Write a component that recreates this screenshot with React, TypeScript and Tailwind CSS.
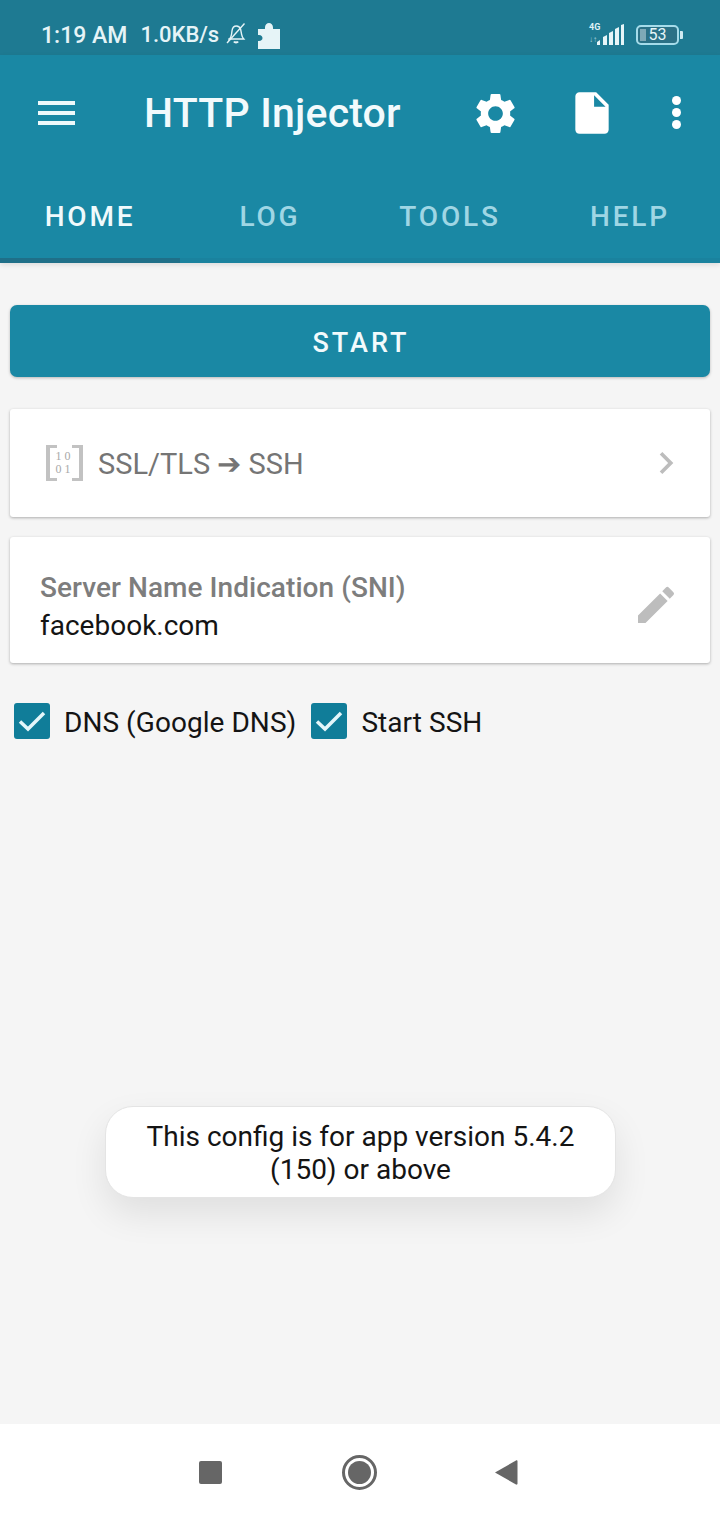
import { MdChevronRight, MdEdit, MdInsertDriveFile, MdSettings } from "react-icons/md";

function MutedBell() {
  return (
    <svg width="24" height="24" viewBox="0 0 24 24" fill="none" stroke="#e6f4f7" strokeWidth="1.4">
      <path d="M5 18.500c1.600-1.600 2.400-3 2.600-5.500l.4-3.200C8.400 7 10 5 12.400 5c2.200 0 3.600 1.400 4.200 3.200l1 5.200c.3 1.900 1 3.300 2.200 4.600H5z" />
      <path d="M3 22 20.500 2.500" />
      <path d="M10 20.500c.6 1.200 3.400 1.200 4 0" strokeWidth="2" />
    </svg>
  );
}

function Puzzle() {
  return (
    <svg width="22" height="27" viewBox="0 0 22 27" fill="#e6f4f7">
      <path d="M0 7h7c-1-8 9-8 8 0h7v20H0v-8c6 1 6-7 0-6z" />
    </svg>
  );
}

function Signal() {
  return (
    <div className="relative w-[36px] h-[22px]">
      <span className="absolute left-0 top-[-2px] text-[9px] leading-[10px] font-bold text-[#dff1f5]">4G</span>
      <span className="absolute left-0 bottom-[2px] text-[8px] leading-[9px] text-[#a9d5df]">↓↑</span>
      <svg className="absolute left-[7px] top-0" width="29" height="22" viewBox="0 0 29 22" fill="#e6f5f8">
        <path d="M1 21v-3l3-2v5z" />
        <path d="M7 21v-8l4-2v10z" />
        <path d="M13 21V9l4-2v14z" />
        <path d="M19 21V5l4-2v18z" />
        <path d="M25 21V1l3-1v21z" />
      </svg>
    </div>
  );
}

function Battery() {
  return (
    <div className="flex items-center">
      <div className="relative w-[43px] h-[20px] rounded-[5px] border-[2px] border-[#a5dcea] bg-[#2b7186] overflow-hidden flex items-center justify-center">
        <div className="absolute left-[2px] top-[2px] bottom-[2px] w-[6px] bg-[#7fa9b6]" />
        <span className="relative text-[16px] leading-none text-[#e6f5f8]">53</span>
      </div>
      <div className="w-[3px] h-[8px] ml-[1px] bg-[#cfeaf1] rounded-r-[1px]" />
    </div>
  );
}

function StatusBar() {
  return (
    <div className="h-[55px] bg-[#1e7a92] flex items-center pt-[15px] pl-[41px] pr-[37px] text-[#e6f4f7]">
      <span className="text-[23px] font-medium leading-none">1:19 AM</span>
      <span className="ml-[13px] text-[22px] font-medium leading-none">1.0KB/s</span>
      <span className="ml-[5px] mt-[-4px]">
        <MutedBell />
      </span>
      <span className="ml-[10px] mr-auto">
        <Puzzle />
      </span>
      <Signal />
      <div className="ml-[11px]">
        <Battery />
      </div>
    </div>
  );
}

function Toolbar() {
  return (
    <div className="h-[115px] flex items-center pl-[38px] pt-[1px]">
      <div className="flex flex-col gap-[6px] w-[37px]">
        <div className="h-[4px] bg-[#eef9fb]" />
        <div className="h-[4px] bg-[#eef9fb]" />
        <div className="h-[4px] bg-[#eef9fb]" />
      </div>
      <h1 className="ml-[69px] text-[41px] leading-none font-medium text-[#f2fafc] whitespace-nowrap tracking-[0.2px]">
        HTTP Injector
      </h1>
      <MdSettings className="ml-[70px]" size={49} color="#fff" />
      <MdInsertDriveFile className="ml-[47px]" size={50} color="#fff" />
      <div className="ml-[55px] flex flex-col gap-[3px] mt-[-2px]">
        <div className="w-[9px] h-[9px] rounded-full bg-white" />
        <div className="w-[9px] h-[9px] rounded-full bg-white" />
        <div className="w-[9px] h-[9px] rounded-full bg-white" />
      </div>
    </div>
  );
}

function Tabs() {
  const tabs = ["HOME", "LOG", "TOOLS", "HELP"];
  return (
    <div className="relative h-[93px] grid grid-cols-4">
      {tabs.map((t, i) => (
        <div
          key={t}
          className={
            i === 0
              ? "flex justify-center pt-[30px] text-[28px] leading-[33px] font-medium tracking-[2.8px] text-[#f0fafc]"
              : "flex justify-center pt-[30px] text-[28px] leading-[33px] font-medium tracking-[2.8px] text-[#9fd6e4]"
          }
        >
          {t}
        </div>
      ))}
      <div className="absolute left-0 right-0 bottom-0 h-[5px] bg-[#1a829e]" />
      <div className="absolute left-0 bottom-0 w-[180px] h-[5px] bg-[#1f6f88]" />
    </div>
  );
}

function BinaryIcon() {
  return (
    <div className="relative w-[37px] h-[36px] border-x-[4px] border-[#c2c2c2] flex flex-col items-center justify-center font-['Liberation_Serif',serif] text-[12px] leading-[13px] tracking-[3px] text-[#a8a8a8]">
      <div className="absolute left-0 top-0 w-[7px] h-[3px] bg-[#c2c2c2]" />
      <div className="absolute left-0 bottom-0 w-[7px] h-[3px] bg-[#c2c2c2]" />
      <div className="absolute right-0 top-0 w-[7px] h-[3px] bg-[#c2c2c2]" />
      <div className="absolute right-0 bottom-0 w-[7px] h-[3px] bg-[#c2c2c2]" />
      <span>10</span>
      <span>01</span>
    </div>
  );
}

function Check({ label }: { label: string }) {
  return (
    <div className="flex items-center">
      <div className="w-[36px] h-[36px] rounded-[3px] bg-[#107d99] flex items-center justify-center">
        <svg width="30" height="24" viewBox="0 0 30 24" fill="none" stroke="#e4f6fa" strokeWidth="3.500">
          <path d="M3 12.500 11 20 27 4" />
        </svg>
      </div>
      <span className="ml-[14px] mt-[3px] text-[28px] leading-none tracking-[0.05px] text-[#141414]">{label}</span>
    </div>
  );
}

function NavBar() {
  return (
    <div className="h-[96px] bg-white relative flex items-center justify-center">
      <div className="flex items-center mr-[4px]">
        <div className="w-[23px] h-[23px] rounded-[2px] bg-[#666666]" />
        <div className="ml-[120px] w-[35px] h-[35px] rounded-full border-[3px] border-[#666666] flex items-center justify-center">
          <div className="w-[23px] h-[23px] rounded-full bg-[#666666]" />
        </div>
        <svg className="ml-[117px]" width="24" height="27" viewBox="0 0 24 27" fill="#666666">
          <path d="M1 13.500 22 1.500c.8-.4 1.500 0 1.500 1v22c0 1-.7 1.400-1.500 1z" />
        </svg>
      </div>
    </div>
  );
}

export default function App() {
  return (
    <div className="relative w-[720px] h-[1520px] overflow-hidden flex flex-col bg-[#f5f5f5] font-['Roboto',sans-serif]">
      <StatusBar />
      <div className="bg-[#1a88a4] shadow-[0_2px_5px_rgba(0,0,0,0.1)]">
        <Toolbar />
        <Tabs />
      </div>

      <main className="flex-1 px-[10px] pt-[42px]">
        <div className="h-[72px] pt-[4px] pl-[2px] rounded-[7px] bg-[#1a88a4] shadow-[0_1px_3px_rgba(0,0,0,0.25)] flex items-center justify-center text-[27px] font-medium tracking-[3px] text-[#f2fafc]">
          START
        </div>

        <div className="mt-[32px] h-[108px] bg-white rounded-[3px] shadow-[0_1px_3px_rgba(0,0,0,0.3)] flex items-center pl-[36px] pr-[22px]">
          <BinaryIcon />
          <span className="ml-[15px] mt-[2px] text-[29px] leading-none text-[#757575]">SSL/TLS ➔ SSH</span>
          <MdChevronRight className="ml-auto" size={44} color="#bdbdbd" />
        </div>

        <div className="mt-[20px] h-[126px] bg-white rounded-[3px] shadow-[0_1px_3px_rgba(0,0,0,0.3)] flex items-center pl-[30px] pr-[30px]">
          <div className="flex flex-col pt-[16px]">
            <span className="text-[28px] leading-[36px] font-medium text-[#7d7d7d] tracking-[0.05px]">Server Name Indication (SNI)</span>
            <span className="text-[28px] leading-[40px] text-[#141414]">facebook.com</span>
          </div>
          <MdEdit className="ml-auto mt-[10px]" size={48} color="#bdbdbd" />
        </div>

        <div className="mt-[40px] pl-[4px] flex items-center gap-[15px]">
          <Check label="DNS (Google DNS)" />
          <Check label="Start SSH" />
        </div>
      </main>

      <NavBar />

      <div className="absolute left-[105px] top-[1106px] w-[511px] h-[92px] pt-[2px] rounded-[28px] bg-white border border-[#e4e4e4] shadow-[0_16px_36px_rgba(0,0,0,0.09)] flex items-center justify-center text-center text-[28px] leading-[33px] text-[#141414]">
        This config is for app version 5.4.2
        <br />
        (150) or above
      </div>
    </div>
  );
}
